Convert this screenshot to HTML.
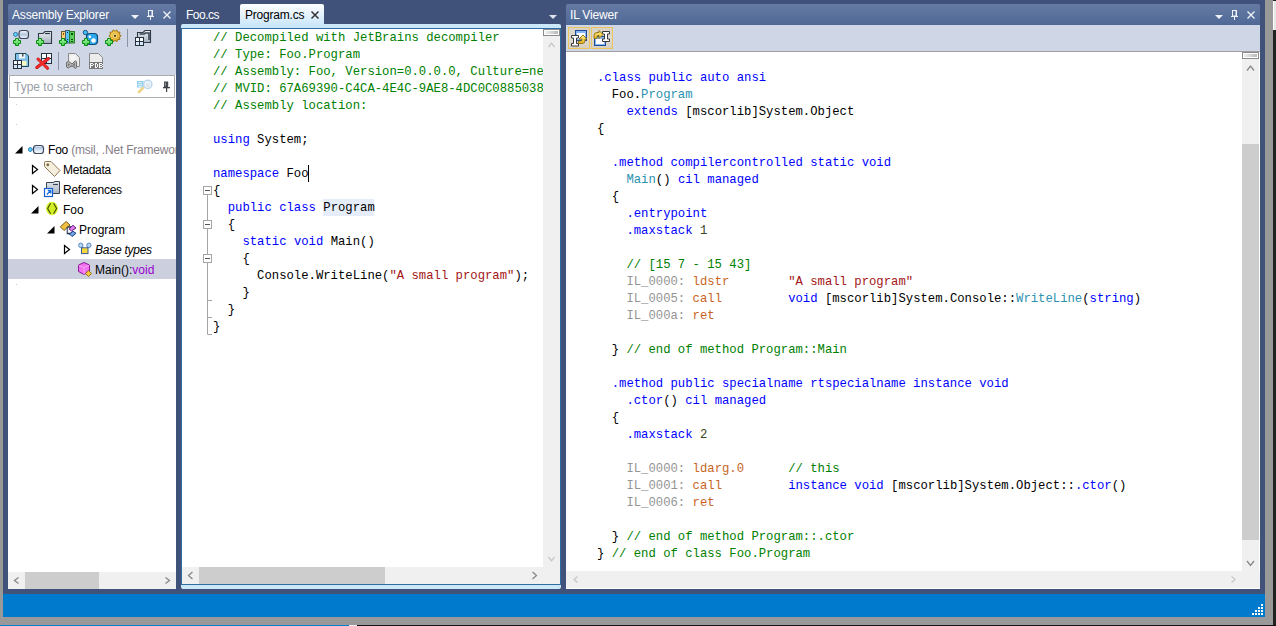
<!DOCTYPE html>
<html><head><meta charset="utf-8">
<style>
*{margin:0;padding:0;box-sizing:border-box}
html,body{width:1276px;height:626px;overflow:hidden}
body{position:relative;background:#40527a;font-family:"Liberation Sans",sans-serif;font-size:12px}
.a{position:absolute}
.hdr{position:absolute;height:21px;border-radius:2px 2px 0 0;background:linear-gradient(#667ba3,#4e6896);color:#fff}
.hdr .t{position:absolute;left:4px;top:4px;font-size:12px;white-space:nowrap;letter-spacing:-0.18px}
.mono{font-family:"Liberation Mono",monospace;font-size:12.25px;white-space:pre}
.code .l{position:absolute;left:0;height:17px;line-height:17px}
.kw{color:#0000ff}
.ty{color:#2b91af}
.cm{color:#008000}
.st{color:#a31515}
.lb{color:#959595}
.op{color:#c8641e}
.hl{}
.tr{line-height:20px;white-space:nowrap;color:#000}
.ls{letter-spacing:-0.25px}
.sbh{position:absolute;height:17px;background:#f0f0f0}
.sbv{position:absolute;width:17px;background:#f0f0f0}
</style></head><body>
<!-- outer gray borders -->
<div class="a" style="left:0;top:0;width:3px;height:626px;background:#999"></div>
<div class="a" style="left:1265px;top:0;width:8px;height:626px;background:#999"></div>
<div class="a" style="left:1273px;top:0;width:3px;height:626px;background:#222"></div>
<div class="a" style="left:0;top:617px;width:1273px;height:8px;background:#999"></div>
<div class="a" style="left:0;top:625px;width:349px;height:1px;background:#007acc"></div>
<div class="a" style="left:349px;top:625px;width:8px;height:1px;background:#eee"></div>
<div class="a" style="left:357px;top:625px;width:919px;height:1px;background:#111"></div>
<!-- status bar -->
<div class="a" style="left:3px;top:594px;width:1262px;height:23px;background:#007acc"></div>

<!-- ===== Assembly Explorer ===== -->
<div class="hdr" style="left:8px;top:4px;width:168px"><span class="t">Assembly Explorer</span></div>
<div class="a" style="left:8px;top:25px;width:168px;height:50px;background:#cfd6e5"></div>
<div class="a" style="left:8px;top:75px;width:168px;height:514px;background:#fff"></div>
<div class="a" style="left:9px;top:75px;width:166px;height:23px;border:1px solid #abadb3;background:#fff"></div>
<div class="a" style="left:14px;top:80px;color:#9aa0a8">Type to search</div>
<!-- tree -->
<div class="a" style="left:8px;top:259px;width:168px;height:20px;background:#cbcfde"></div>
<svg class="a" style="left:0;top:0" width="180" height="300" viewBox="0 0 180 300">
 <!-- expanders -->
 <path d="M22.5 146 L22.5 153.5 L15 153.5 Z" fill="#000"/>
 <path d="M32.5 165.5 L32.5 173.5 L37.5 169.5 Z" fill="none" stroke="#000" stroke-width="1.2"/>
 <path d="M32.5 185.5 L32.5 193.5 L37.5 189.5 Z" fill="none" stroke="#000" stroke-width="1.2"/>
 <path d="M38.5 206 L38.5 213.5 L31 213.5 Z" fill="#000"/>
 <path d="M54.5 226 L54.5 233.5 L47 233.5 Z" fill="#000"/>
 <path d="M64.5 245.5 L64.5 253.5 L69.5 249.5 Z" fill="none" stroke="#000" stroke-width="1.2"/>
 <!-- assembly icon -->
 <defs>
  <linearGradient id="gcap" x1="0" y1="0" x2="0" y2="1"><stop offset="0" stop-color="#ffffff"/><stop offset=".25" stop-color="#b4c6e2"/><stop offset=".7" stop-color="#e6eef8"/><stop offset="1" stop-color="#fafcff"/></linearGradient>
  <linearGradient id="gfold" x1="0" y1="0" x2="0" y2="1"><stop offset="0" stop-color="#e3e8ee"/><stop offset="1" stop-color="#a9b4c0"/></linearGradient>
 </defs>
 <line x1="30" y1="149.5" x2="34" y2="149.5" stroke="#5aa9d8" stroke-width="1.2"/>
 <circle cx="30.3" cy="149.5" r="1.9" fill="#50d4fa" stroke="#3a78b8" stroke-width="1"/>
 <rect x="33.5" y="145.5" width="10" height="8" rx="2.8" fill="url(#gcap)" stroke="#3c4860" stroke-width="1.15"/>
 <!-- tag -->
 <path d="M44.5 162.5 Q44.5 161.5 45.5 161.5 L51 161.5 L60 170.5 L54.5 176.5 L44.5 166.5 Z" fill="#f6eedc" stroke="#8f7a56" stroke-width="1" stroke-linejoin="round"/>
 <circle cx="47.8" cy="164.8" r="1.4" fill="#7a6440"/>
 <!-- references -->
 <path d="M46.5 182.5 L53 182.5 L55 181.5 L59.5 181.5 L59.5 193.5 L46.5 193.5 Z" fill="url(#gfold)" stroke="#3c4653" stroke-width="1"/>
 <path d="M53 184.5 L58 184.5" stroke="#3c4653" stroke-width="1.2"/>
 <rect x="44.5" y="188.5" width="8" height="8" fill="#fff" stroke="#1a5fd0" stroke-width="1.2"/>
 <path d="M46.8 194.5 L50.5 190.8 M47.8 190.5 L50.8 190.5 L50.8 193.5" stroke="#1a6fe0" stroke-width="1.3" fill="none"/>
 <!-- namespace -->
 <ellipse cx="52" cy="208.5" rx="5.6" ry="6.4" fill="#d4ee24" stroke="#def53a" stroke-width=".8"/>
 <path d="M50.6 203.3 L47.6 208.5 L50.6 213.7 M53.6 203.3 L56.6 208.5 L53.6 213.7" fill="none" stroke="#3e4a08" stroke-width="1.1"/>
 <!-- class Program -->
 <path d="M66.1 221.5 L70 225 L64 230.5 L60.3 226.8 Z" fill="#f0c040" stroke="#7a5a12" stroke-width="1" stroke-linejoin="round"/>
 <path d="M67.5 227 H71.5 M67.5 227 V233.5 H71" fill="none" stroke="#1a3050" stroke-width="1.6"/>
 <path d="M68.2 227.6 V232.8" stroke="#fff" stroke-width="1"/>
 <path d="M73 225.3 L76 228 L71.5 231 L69 228.8 Z" fill="#e080f0" stroke="#6a1a80" stroke-width="1" stroke-linejoin="round"/>
 <path d="M73 231.3 L76 233.3 L72 236.5 L69.5 234 Z" fill="#70a8e8" stroke="#1a3a80" stroke-width="1" stroke-linejoin="round"/>
 <!-- base types -->
 <path d="M81 246 L83 248 M89 246 L87 248" stroke="#5a88c0" stroke-width="1"/>
 <circle cx="80.8" cy="245.3" r="2.2" fill="#b8d8f5" stroke="#5a88c0" stroke-width="1"/>
 <circle cx="88.9" cy="245.3" r="2.2" fill="#b8d8f5" stroke="#5a88c0" stroke-width="1"/>
 <rect x="81.5" y="247.8" width="6.5" height="5.8" fill="#f5d83a" stroke="#3a5a98" stroke-width="1"/>
 <!-- method -->
 <path d="M84 262.5 L89.5 265 L89.5 271.5 L84 274.5 L78.5 271.5 L78.5 265 Z" fill="#f070f0" stroke="#8a1a9a" stroke-width="1"/>
 <path d="M78.5 265 L84 267.5 L89.5 265 M84 267.5 L84 274.5" fill="none" stroke="#f8b0f8" stroke-width=".8"/>
 <path d="M88.5 270.5 L91.5 273.5 L88.5 276.5 L85.5 273.5 Z" fill="#f2cc3a" stroke="#8a6a10" stroke-width=".9"/>
</svg>
<div class="a" style="left:48px;top:140px;line-height:20px;white-space:nowrap;width:128px;overflow:hidden;letter-spacing:-0.2px">Foo <span style="color:#868088">(msil, .Net Framework v4.0)</span></div>
<div class="a tr ls" style="left:63px;top:160px">Metadata</div>
<div class="a tr ls" style="left:63px;top:180px">References</div>
<div class="a tr" style="left:63px;top:200px">Foo</div>
<div class="a tr" style="left:79px;top:220px">Program</div>
<div class="a tr ls" style="left:95px;top:240px;font-style:italic">Base types</div>
<div class="a tr" style="left:95px;top:260px">Main():<span style="color:#9a00d0">void</span></div>

<div class="sbh" style="left:8px;top:572px;width:168px"></div>
<div class="a" style="left:25px;top:572px;width:74px;height:17px;background:#cdcdcd"></div>

<!-- ===== Document well ===== -->
<div class="a" style="left:186px;top:8px;color:#fff;letter-spacing:-0.5px">Foo.cs</div>
<div class="a" style="left:240px;top:4px;width:84px;height:21px;border-radius:2px 2px 0 0;background:linear-gradient(#fdfeff,#e8f3fc 45%,#cbe7fa)"></div>
<div class="a" style="left:245px;top:8px;color:#000;letter-spacing:-0.2px">Program.cs</div>
<div class="a" style="left:181px;top:24px;width:380px;height:565px;border-radius:2px;background:#cbe8fa"></div>
<div class="a" style="left:181px;top:28px;width:380px;height:557px;background:#fff;border:1px solid #2e6da4"></div>
<div class="a" style="left:323px;top:199px;width:51px;height:17px;background:#e5edfa"></div>
<div class="a mono code" style="left:182px;top:29px;width:361px;height:538px;overflow:hidden"><div class="a" style="left:31px;top:1px">
<div class="l" style="top:0px"><span class="cm">// Decompiled with JetBrains decompiler</span></div>
<div class="l" style="top:17px"><span class="cm">// Type: Foo.Program</span></div>
<div class="l" style="top:34px"><span class="cm">// Assembly: Foo, Version=0.0.0.0, Culture=neutral, PublicKeyToken=null</span></div>
<div class="l" style="top:51px"><span class="cm">// MVID: 67A69390-C4CA-4E4C-9AE8-4DC0C0885038</span></div>
<div class="l" style="top:68px"><span class="cm">// Assembly location:</span></div>
<div class="l" style="top:85px"></div>
<div class="l" style="top:102px"><span class="kw">using</span> System;</div>
<div class="l" style="top:119px"></div>
<div class="l" style="top:136px"><span class="kw">namespace</span> Foo</div>
<div class="l" style="top:153px">{</div>
<div class="l" style="top:170px">  <span class="kw">public</span> <span class="kw">class</span> <span class="hl">Program</span></div>
<div class="l" style="top:187px">  {</div>
<div class="l" style="top:204px">    <span class="kw">static</span> <span class="kw">void</span> Main()</div>
<div class="l" style="top:221px">    {</div>
<div class="l" style="top:238px">      Console.WriteLine(<span class="st">"A small program"</span>);</div>
<div class="l" style="top:255px">    }</div>
<div class="l" style="top:272px">  }</div>
<div class="l" style="top:289px">}</div>
</div></div>
<div class="sbv" style="left:543px;top:29px;height:538px"></div>
<div class="sbh" style="left:182px;top:567px;width:378px"></div>
<div class="a" style="left:199px;top:567px;width:186px;height:17px;background:#cdcdcd"></div>

<!-- ===== IL Viewer ===== -->
<div class="hdr" style="left:566px;top:4px;width:694px"><span class="t">IL Viewer</span></div>
<div class="a" style="left:566px;top:25px;width:694px;height:26px;background:#cfd6e5"></div>
<div class="a" style="left:566px;top:51px;width:694px;height:538px;background:#fff;border-top:1px solid #a0a0a0"></div>
<div class="a mono code" style="left:567px;top:52px;width:675px;height:519px;overflow:hidden"><div class="a" style="left:30px;top:18px">
<div class="l" style="top:0px"><span class="kw">.class public auto ansi</span></div>
<div class="l" style="top:17px">  Foo.<span class="ty">Program</span></div>
<div class="l" style="top:34px">    <span class="kw">extends</span> [mscorlib]System.Object</div>
<div class="l" style="top:51px">{</div>
<div class="l" style="top:68px"></div>
<div class="l" style="top:85px">  <span class="kw">.method compilercontrolled static void</span></div>
<div class="l" style="top:102px">    <span class="ty">Main</span>() <span class="kw">cil managed</span></div>
<div class="l" style="top:119px">  {</div>
<div class="l" style="top:136px">    <span class="kw">.entrypoint</span></div>
<div class="l" style="top:153px">    <span class="kw">.maxstack</span> <span style="color:#3a4420">1</span></div>
<div class="l" style="top:170px"></div>
<div class="l" style="top:187px">    <span class="cm">// [15 7 - 15 43]</span></div>
<div class="l" style="top:204px">    <span class="lb">IL_0000: </span><span class="op">ldstr</span>        <span class="st">"A small program"</span></div>
<div class="l" style="top:221px">    <span class="lb">IL_0005: </span><span class="op">call</span>         <span class="kw">void</span> [mscorlib]System.Console::<span class="ty">WriteLine</span>(<span class="kw">string</span>)</div>
<div class="l" style="top:238px">    <span class="lb">IL_000a: </span><span class="op">ret</span></div>
<div class="l" style="top:255px"></div>
<div class="l" style="top:272px">  } <span class="cm">// end of method Program::Main</span></div>
<div class="l" style="top:289px"></div>
<div class="l" style="top:306px">  <span class="kw">.method public specialname rtspecialname instance void</span></div>
<div class="l" style="top:323px">    <span class="kw">.ctor</span>() <span class="kw">cil managed</span></div>
<div class="l" style="top:340px">  {</div>
<div class="l" style="top:357px">    <span class="kw">.maxstack</span> <span style="color:#3a4420">2</span></div>
<div class="l" style="top:374px"></div>
<div class="l" style="top:391px">    <span class="lb">IL_0000: </span><span class="op">ldarg.0</span>      <span class="cm">// this</span></div>
<div class="l" style="top:408px">    <span class="lb">IL_0001: </span><span class="op">call</span>         <span class="kw">instance void</span> [mscorlib]System.Object::<span class="kw">.ctor</span>()</div>
<div class="l" style="top:425px">    <span class="lb">IL_0006: </span><span class="op">ret</span></div>
<div class="l" style="top:442px"></div>
<div class="l" style="top:459px">  } <span class="cm">// end of method Program::.ctor</span></div>
<div class="l" style="top:476px">} <span class="cm">// end of class Foo.Program</span></div>
</div></div>
<div class="sbv" style="left:1242px;top:52px;height:520px"></div>
<div class="a" style="left:1242px;top:144px;width:17px;height:396px;background:#cdcdcd"></div>
<div class="sbh" style="left:566px;top:571px;width:694px"></div>

<svg class="a" style="left:0;top:0" width="1276" height="626" viewBox="0 0 1276 626">
<defs>
 <linearGradient id="gpl" x1="0" y1="0" x2="0" y2="1"><stop offset="0" stop-color="#a8f5a0"/><stop offset="1" stop-color="#3ed04a"/></linearGradient>
 <linearGradient id="gcap2" x1="0" y1="0" x2="0" y2="1"><stop offset="0" stop-color="#f6f9fd"/><stop offset=".5" stop-color="#b8c8df"/><stop offset="1" stop-color="#f0f4fa"/></linearGradient>
 <linearGradient id="gfd" x1="0" y1="0" x2="0" y2="1"><stop offset="0" stop-color="#eef2f6"/><stop offset="1" stop-color="#a3afbc"/></linearGradient>
 <radialGradient id="ggear" cx=".45" cy=".45" r=".6"><stop offset="0" stop-color="#fff2b0"/><stop offset=".6" stop-color="#f0b830"/><stop offset="1" stop-color="#b08010"/></radialGradient>
 <g id="plus"><path d="M2.5 0.5 h3 v2 h2 v3 h-2 v2 h-3 v-2 h-2 v-3 h2 Z" fill="url(#gpl)" stroke="#0b8a14" stroke-width="1"/></g>
 <g id="grid"><rect x="0" y="0" width="9" height="9" fill="#28323c"/><rect x="1" y="1" width="3" height="3" fill="#f4f9ff"/><rect x="5" y="1" width="3" height="3" fill="#f4f9ff"/><rect x="1" y="5" width="3" height="3" fill="#d8e8fc"/><rect x="5" y="5" width="3" height="3" fill="#d8e8fc"/></g><g id="grid2"><rect x="0" y="0" width="11" height="11" fill="#28323c"/><rect x="1" y="1" width="4" height="4" fill="#f4f9ff"/><rect x="6" y="1" width="4" height="4" fill="#f4f9ff"/><rect x="1" y="6" width="4" height="4" fill="#d8e8fc"/><rect x="6" y="6" width="4" height="4" fill="#d8e8fc"/></g>
</defs>
<!-- AE header buttons -->
<path d="M131 15 L139 15 L135 19 Z" fill="#eef1f6"/>
<g fill="none" stroke="#eef1f6" stroke-width="1"><rect x="148.5" y="10.5" width="4" height="5.5"/></g>
<rect x="151.5" y="10" width="1.5" height="6" fill="#eef1f6"/>
<rect x="147" y="16" width="7" height="1" fill="#eef1f6"/>
<rect x="150" y="17" width="1" height="3" fill="#eef1f6"/>
<path d="M163.5 11.5 L170.5 18.5 M170.5 11.5 L163.5 18.5" stroke="#eef1f6" stroke-width="1.4"/>
<!-- IL header buttons -->
<path d="M1215 15 L1223 15 L1219 19 Z" fill="#eef1f6"/>
<g fill="none" stroke="#eef1f6" stroke-width="1"><rect x="1232.5" y="10.5" width="4" height="5.5"/></g>
<rect x="1235.5" y="10" width="1.5" height="6" fill="#eef1f6"/>
<rect x="1231" y="16" width="7" height="1" fill="#eef1f6"/>
<rect x="1234" y="17" width="1" height="3" fill="#eef1f6"/>
<path d="M1247.5 11.5 L1254.5 18.5 M1254.5 11.5 L1247.5 18.5" stroke="#eef1f6" stroke-width="1.4"/>
<!-- doc well -->
<path d="M311.5 11.5 L318.5 18.5 M318.5 11.5 L311.5 18.5" stroke="#333" stroke-width="1.5"/>
<path d="M549 15 L557 15 L553 19 Z" fill="#dde2ec"/>
<!-- AE toolbar row1 -->
<line x1="15.5" y1="34.4" x2="19" y2="34.4" stroke="#4ab8e8" stroke-width="1.2"/>
<circle cx="15.5" cy="34.4" r="2" fill="#5ad8fa" stroke="#3f6fa8" stroke-width="1"/>
<rect x="19" y="30.5" width="9.5" height="8" rx="2.8" fill="url(#gcap2)" stroke="#3a4658" stroke-width="1.1"/>
<use href="#plus" x="13" y="38"/>
<path d="M38.5 33.5 L43 33.5 L45 31.5 L51.5 31.5 L51.5 43.5 L38.5 43.5 Z" fill="url(#gfd)" stroke="#2f3a48" stroke-width="1.1"/>
<path d="M45 33.5 L50 33.5" stroke="#2f3a48" stroke-width="1.3"/>
<use href="#plus" x="36" y="38"/>
<rect x="61.5" y="31.5" width="4" height="7" fill="#ffd070" stroke="#6a5a30" stroke-width="1"/>
<rect x="65.5" y="30.5" width="4" height="12.5" fill="#58c4f8" stroke="#4a5a68" stroke-width="1"/>
<rect x="69.5" y="31.5" width="5" height="11.5" fill="#5ad05a" stroke="#2a7a2a" stroke-width="1"/>
<rect x="71" y="33" width="2" height="2" fill="#0a4a0a"/><rect x="71" y="39" width="2" height="1" fill="#0a4a0a"/><rect x="71" y="41" width="2" height="1" fill="#0a4a0a"/><rect x="63" y="33" width="1" height="2" fill="#8a4a10"/><rect x="67" y="32" width="1" height="1" fill="#0a2a6a"/><rect x="67" y="39" width="1" height="1" fill="#0a2a6a"/><rect x="67" y="41" width="1" height="1" fill="#0a2a6a"/>
<use href="#plus" x="59" y="38"/>
<circle cx="85.4" cy="32.5" r="2.2" fill="#48b8f0" stroke="#1a5a88" stroke-width="1"/>
<rect x="86.5" y="33.5" width="11" height="11" rx="3.5" fill="#2ea8f0" stroke="#0c4a78" stroke-width="1.2"/>
<circle cx="89.8" cy="36.8" r="1.3" fill="#fff"/>
<circle cx="93.5" cy="40.5" r="2.3" fill="#fff"/>
<use href="#plus" x="82" y="38"/>
<g transform="translate(115,35.8)">
 <polygon points="6.20,0.00 4.37,1.42 5.02,3.64 2.70,3.72 1.92,5.90 0.00,4.60 -1.92,5.90 -2.70,3.72 -5.02,3.64 -4.37,1.42 -6.20,0.00 -4.37,-1.42 -5.02,-3.64 -2.70,-3.72 -1.92,-5.90 -0.00,-4.60 1.92,-5.90 2.70,-3.72 5.02,-3.64 4.37,-1.42" fill="url(#ggear)" stroke="#9a7418" stroke-width=".9" stroke-linejoin="round"/>
 <circle r="2.6" fill="#ffe27a" stroke="#c89a28" stroke-width=".6"/>
 <circle r="1.1" fill="#3a2a10"/>
</g>
<use href="#plus" x="105" y="38"/>
<rect x="127" y="29" width="1" height="18" fill="#8a95a8"/>
<path d="M137.5 32.5 L143 32.5 L145 30.5 L150.5 30.5 L150.5 42.5 L137.5 42.5 Z" fill="url(#gfd)" stroke="#2f3a48" stroke-width="1.1"/>
<path d="M139.5 34 L144 34 L145.5 33 L149 33 L149 40" fill="none" stroke="#3a4654" stroke-width="1.6"/>
<use href="#grid" x="135" y="37"/>
<!-- AE toolbar row2 -->
<path d="M15.5 53.5 L26 53.5 L28.5 56 L28.5 66.5 L15.5 66.5 Z" fill="#80c0e8" stroke="#1a4a5a" stroke-width="1"/>
<rect x="19" y="54" width="6" height="4.5" fill="#eef3f8"/>
<rect x="22" y="54" width="1.5" height="2.5" fill="#555"/>
<rect x="21.5" y="61" width="5" height="4.5" fill="#fffac0"/>
<use href="#grid" x="13" y="60"/>
<use href="#grid2" x="41" y="53"/>
<path d="M36.8 67.5 L48.5 58.5 M38 59 L47.5 68.3" stroke="#c80000" stroke-width="3" stroke-linecap="round"/><path d="M36.8 67.5 L48.5 58.5 M38 59 L47.5 68.3" stroke="#f23030" stroke-width="1.8" stroke-linecap="round"/>
<rect x="58" y="52" width="1" height="18" fill="#8a95a8"/>
<path d="M68.5 53.5 L75.5 53.5 L79.5 57.5 L79.5 66.5 L68.5 66.5 Z" fill="#ececec" stroke="#8c8c8c" stroke-width="1"/>
<rect x="70.5" y="55.5" width="5" height="5" fill="#f6f6f6"/>
<path d="M66.5 62.3 L68.5 61.3 L72 64 L75.2 60.8 L76.6 61.8 L76.6 67.6 L75.2 68.4 L72 65.6 L68.5 68 L66.5 67 Z" fill="#b4b4b4" stroke="#6e6e6e" stroke-width="1" stroke-linejoin="round"/>
<path d="M68 63.3 L70 64.7 L68 66 Z M74.8 62.6 L72.9 64.8 L74.8 66.7 Z" fill="#6e6e6e"/>
<path d="M89.5 53.5 L98.5 53.5 L102.5 57.5 L102.5 62.5 L89.5 62.5 Z" fill="#ececec" stroke="#8a8a8a" stroke-width="1"/>
<rect x="89" y="62" width="14" height="7" fill="#787878"/>
<g fill="#fafafa">
 <rect x="90" y="63" width="1" height="5"/><rect x="91" y="63" width="2" height="1"/><rect x="93" y="64" width="1" height="1"/><rect x="91" y="65" width="2" height="1"/>
 <rect x="95" y="63" width="1" height="5"/><rect x="96" y="63" width="1" height="1"/><rect x="97" y="64" width="1" height="3"/><rect x="96" y="67" width="1" height="1"/>
 <rect x="99" y="63" width="1" height="5"/><rect x="100" y="63" width="2" height="1"/><rect x="102" y="64" width="1" height="1"/><rect x="100" y="65" width="2" height="1"/><rect x="102" y="66" width="1" height="1"/><rect x="100" y="67" width="2" height="1"/>
</g>
<!-- search icon + pin -->
<rect x="137" y="81" width="6.5" height="6.5" fill="#90cdec"/>
<path d="M138 82.8 h4 M137.5 84.8 h5 M138.5 86.5 h3" stroke="#e6f6fd" stroke-width="1"/>
<path d="M143 88 L139 92" stroke="#efd48c" stroke-width="2.7" stroke-linecap="round"/>
<circle cx="147.8" cy="84.4" r="4.1" fill="#f2f6f8" stroke="#b6d6ee" stroke-width="1.4"/>
<circle cx="147.8" cy="85" r="2.2" fill="#dde6ea"/>
<rect x="164" y="81.5" width="4.2" height="5.5" fill="#454a50"/>
<rect x="164.8" y="82.5" width="1" height="3.5" fill="#9aa0a6"/>
<rect x="163" y="87" width="7" height="1.3" fill="#3c4046"/>
<rect x="166" y="88" width="1.2" height="4" fill="#3c4046"/>
<!-- IL toolbar buttons -->
<defs>
 <linearGradient id="gbtn" x1="0" y1="0" x2="0" y2="1"><stop offset="0" stop-color="#d9d3c6"/><stop offset=".5" stop-color="#e0dbd0"/><stop offset="1" stop-color="#d6d0c2"/></linearGradient>
 <linearGradient id="garr" x1="0" y1="0" x2="0" y2="1"><stop offset="0" stop-color="#fff08a"/><stop offset="1" stop-color="#e8b820"/></linearGradient>
</defs>
<rect x="568.5" y="27.5" width="21" height="21" fill="url(#gbtn)" stroke="#ebc45e" stroke-width="1"/>
<rect x="591.5" y="27.5" width="21" height="21" fill="url(#gbtn)" stroke="#ebc45e" stroke-width="1"/>
<rect x="575.5" y="30.5" width="11" height="10" fill="#8ab8f6" stroke="#1d4a92" stroke-width="1"/>
<rect x="577" y="33" width="8" height="6" fill="#fff"/>
<path d="M571.5 35.5 h7 v2.5 h-2 v5.5 h2 v2.5 h-7 v-2.5 h2 v-5.5 h-2 Z" fill="#fff" stroke="#3a3a3a" stroke-width="1"/>
<path d="M583 35 L587 39 L585 39 L585 41 Q585 43.5 582 43.5 L578.5 43.5 L578.5 41 L581 41 Q582 41 582 40 L582 39 L579 39 Z" fill="url(#garr)" stroke="#8a6a10" stroke-width=".9"/>
<rect x="594.5" y="36.5" width="11" height="9" fill="#8ab8f6" stroke="#1d4a92" stroke-width="1"/>
<rect x="596" y="39" width="8" height="5" fill="#fff"/>
<path d="M602.5 31.5 h7 v2.5 h-2 v5 h2 v2.5 h-7 v-2.5 h2 v-5 h-2 Z" fill="#fff" stroke="#3a3a3a" stroke-width="1"/>
<path d="M603 34.5 L599 30.5 L599 32.5 L597 32.5 Q594 32.5 594 35.5 L594 38.5 L597 38.5 L597 36.5 Q597 35.5 598 35.5 L599 35.5 L599 38.5 Z" fill="url(#garr)" stroke="#8a6a10" stroke-width=".9"/>
</svg>

<!-- right edge window -->
<div class="a" style="left:1273px;top:1px;width:3px;height:29px;background:#e6e6e6;border-left:1px solid #fff"></div>
<!-- code outlining margin, caret, highlight -->
<svg class="a" style="left:0;top:0" width="1276" height="626" viewBox="0 0 1276 626">
 <g fill="#fff" stroke="#a5a5a5" stroke-width="1">
  <rect x="203.5" y="186.5" width="8" height="8"/>
  <rect x="203.5" y="220.5" width="8" height="8"/>
  <rect x="203.5" y="254.5" width="8" height="8"/>
 </g>
 <g stroke="#555" stroke-width="1"><path d="M205 190.5 h5 M205 224.5 h5 M205 258.5 h5"/></g>
 <g stroke="#a5a5a5" stroke-width="1" fill="none">
  <path d="M207.5 195 V220 M207.5 229 V254 M207.5 263 V334.5 H212 M207.5 300.5 H212 M207.5 317.5 H212"/>
 </g>
 <rect x="308" y="165" width="1" height="17" fill="#000"/>
 <!-- splitter buttons -->
 <rect x="543.5" y="29.5" width="16" height="6" fill="#fff" stroke="#8c8c8c" stroke-width="1"/>
 <rect x="1242.5" y="52.5" width="16" height="6" fill="#fff" stroke="#8c8c8c" stroke-width="1"/>
 <defs><linearGradient id="gsp" x1="0" y1="0" x2="1" y2="0"><stop offset="0" stop-color="#f0f0f0"/><stop offset="1" stop-color="#b8b8b8"/></linearGradient></defs>
 <rect x="545" y="31" width="13" height="3" fill="url(#gsp)"/>
 <rect x="1244" y="54" width="13" height="3" fill="url(#gsp)"/>
 <!-- scrollbar arrows -->
 <g fill="none" stroke-width="1.3">
  <path d="M18.5 577.5 L14.5 580.5 L18.5 583.5" stroke="#888"/>
  <path d="M165.5 577.5 L169.5 580.5 L165.5 583.5" stroke="#888"/>
  <path d="M192.5 572 L188.5 575.5 L192.5 579" stroke="#888"/>
  <path d="M532.5 572 L536.5 575.5 L532.5 579" stroke="#888"/>
  <path d="M548.5 47 L551.5 43 L554.5 47" stroke="#c8c8c8"/>
  <path d="M548.5 557 L551.5 561 L554.5 557" stroke="#c8c8c8"/>
  <path d="M1247 70.5 L1250.5 66 L1254 70.5" stroke="#888"/>
  <path d="M1247 561 L1250.5 565.5 L1254 561" stroke="#888"/>
  <path d="M577.5 576.5 L574 579.5 L577.5 582.5" stroke="#c8c8c8"/>
  <path d="M1231.5 576.5 L1235 579.5 L1231.5 582.5" stroke="#c8c8c8"/>
 </g>
 <!-- resize grip -->
 <g fill="#fff">
  <rect x="1261" y="604" width="2" height="2"/>
  <rect x="1258" y="607" width="2" height="2"/><rect x="1261" y="607" width="2" height="2"/>
  <rect x="1255" y="610" width="2" height="2"/><rect x="1258" y="610" width="2" height="2"/><rect x="1261" y="610" width="2" height="2"/>
  <rect x="1252" y="613" width="2" height="2"/><rect x="1255" y="613" width="2" height="2"/><rect x="1258" y="613" width="2" height="2"/><rect x="1261" y="613" width="2" height="2"/>
 </g>
 <!-- tree dots -->
 <rect x="16" y="104" width="1" height="1" fill="#ccc"/>
 <rect x="16" y="124" width="1" height="1" fill="#ccc"/>
 <rect x="16" y="284" width="1" height="1" fill="#ccc"/>
</svg>

</body></html>
